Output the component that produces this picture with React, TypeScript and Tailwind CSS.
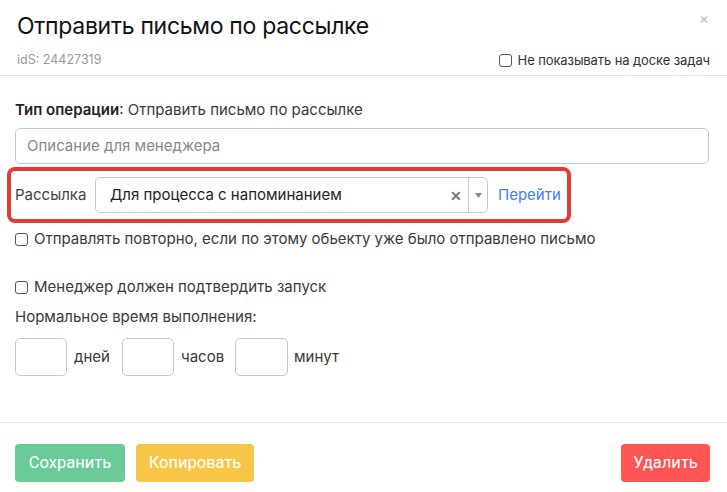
import React from "react";

function Check({ label, className = "" }: { label: string; className?: string }) {
  return (
    <label className={"flex items-center gap-[6px] " + className}>
      <span className="inline-block w-[13px] h-[13px] border border-[#555] rounded-[3px] bg-white" />
      <span>{label}</span>
    </label>
  );
}

export default function App() {
  return (
    <div className="w-[727px] h-[492px] bg-white text-[#3a3a3a] font-['Inter',sans-serif] flex flex-col overflow-hidden">
      <div className="px-[17px] pt-[10px] border-b border-[#e5e5e5] h-[76px] relative">
        <div className="text-[23px] leading-[32px] text-[#111] tracking-[-0.3px]">Отправить письмо по рассылке</div>
        <div className="flex justify-between items-center mt-[9px]">
          <span className="text-[12.5px] text-[#9a9a9a]">idS: 24427319</span>
          <Check label="Не показывать на доске задач" className="text-[13px] text-[#333] tracking-[-0.1px]" />
        </div>
        <span className="absolute right-[18px] top-[8px] text-[#bbb] text-[15px]">×</span>
      </div>
      <div className="pl-[15px] pr-[18px] pt-[24px] flex flex-col text-[15px] flex-1">
        <div className="leading-[20px]">
          <span className="font-semibold text-[#222]">Тип операции</span>: Отправить письмо по рассылке
        </div>
        <div className="mt-[8px] h-[36px] border border-[#c8c8c8] rounded-[5px] flex items-center px-[11px] text-[#888]">
          Описание для менеджера
        </div>
        <div className="mt-[3px] -ml-[8px] w-[564px] h-[56px] border-4 border-[#e53935] rounded-[8px] flex items-center pl-[4px] pr-[5px]">
          <span className="text-[#444] w-[80px]">Рассылка</span>
          <div className="w-[393px] h-[36px] border border-[#c8c8c8] rounded-[5px] flex items-center">
            <span className="flex-1 pl-[14px] text-[#222]">Для процесса с напоминанием</span>
            <span className="w-[24px] flex justify-center text-[#777] text-[14px] font-bold">✕</span>
            <span className="w-px h-[34px] bg-[#ccc]" />
            <span className="w-[18px] flex justify-center">
              <svg width="7" height="5" viewBox="0 0 7 5"><path d="M0 0h7L3.5 5z" fill="#888" /></svg>
            </span>
          </div>
          <span className="ml-[10px] text-[#3b82f6]">Перейти</span>
        </div>
        <Check label="Отправлять повторно, если по этому обьекту уже было отправлено письмо" className="mt-[6px] leading-[20px]" />
        <Check label="Менеджер должен подтвердить запуск" className="mt-[28px] leading-[20px]" />
        <div className="mt-[10px] leading-[20px]">Нормальное время выполнения:</div>
        <div className="mt-[11px] flex items-center">
          <span className="w-[52px] h-[38px] border border-[#c8c8c8] rounded-[5px]" />
          <span className="ml-[7px] w-[48px]">дней</span>
          <span className="w-[52px] h-[38px] border border-[#c8c8c8] rounded-[5px]" />
          <span className="ml-[7px] w-[54px]">часов</span>
          <span className="w-[53px] h-[38px] border border-[#c8c8c8] rounded-[5px]" />
          <span className="ml-[6px]">минут</span>
        </div>
      </div>
      <div className="border-t border-[#e5e5e5] h-[70px] pl-[15px] pr-[17px] pt-[21px] flex items-start justify-between font-['Roboto',sans-serif] text-[16.5px] text-white">
        <div className="flex gap-[11px]">
          <button className="h-[38px] w-[110px] bg-[#6acb96] rounded-[4px]">Сохранить</button>
          <button className="h-[38px] w-[118px] bg-[#f7c648] rounded-[4px]">Копировать</button>
        </div>
        <button className="h-[38px] w-[89px] bg-[#ff5555] rounded-[4px]">Удалить</button>
      </div>
    </div>
  );
}
